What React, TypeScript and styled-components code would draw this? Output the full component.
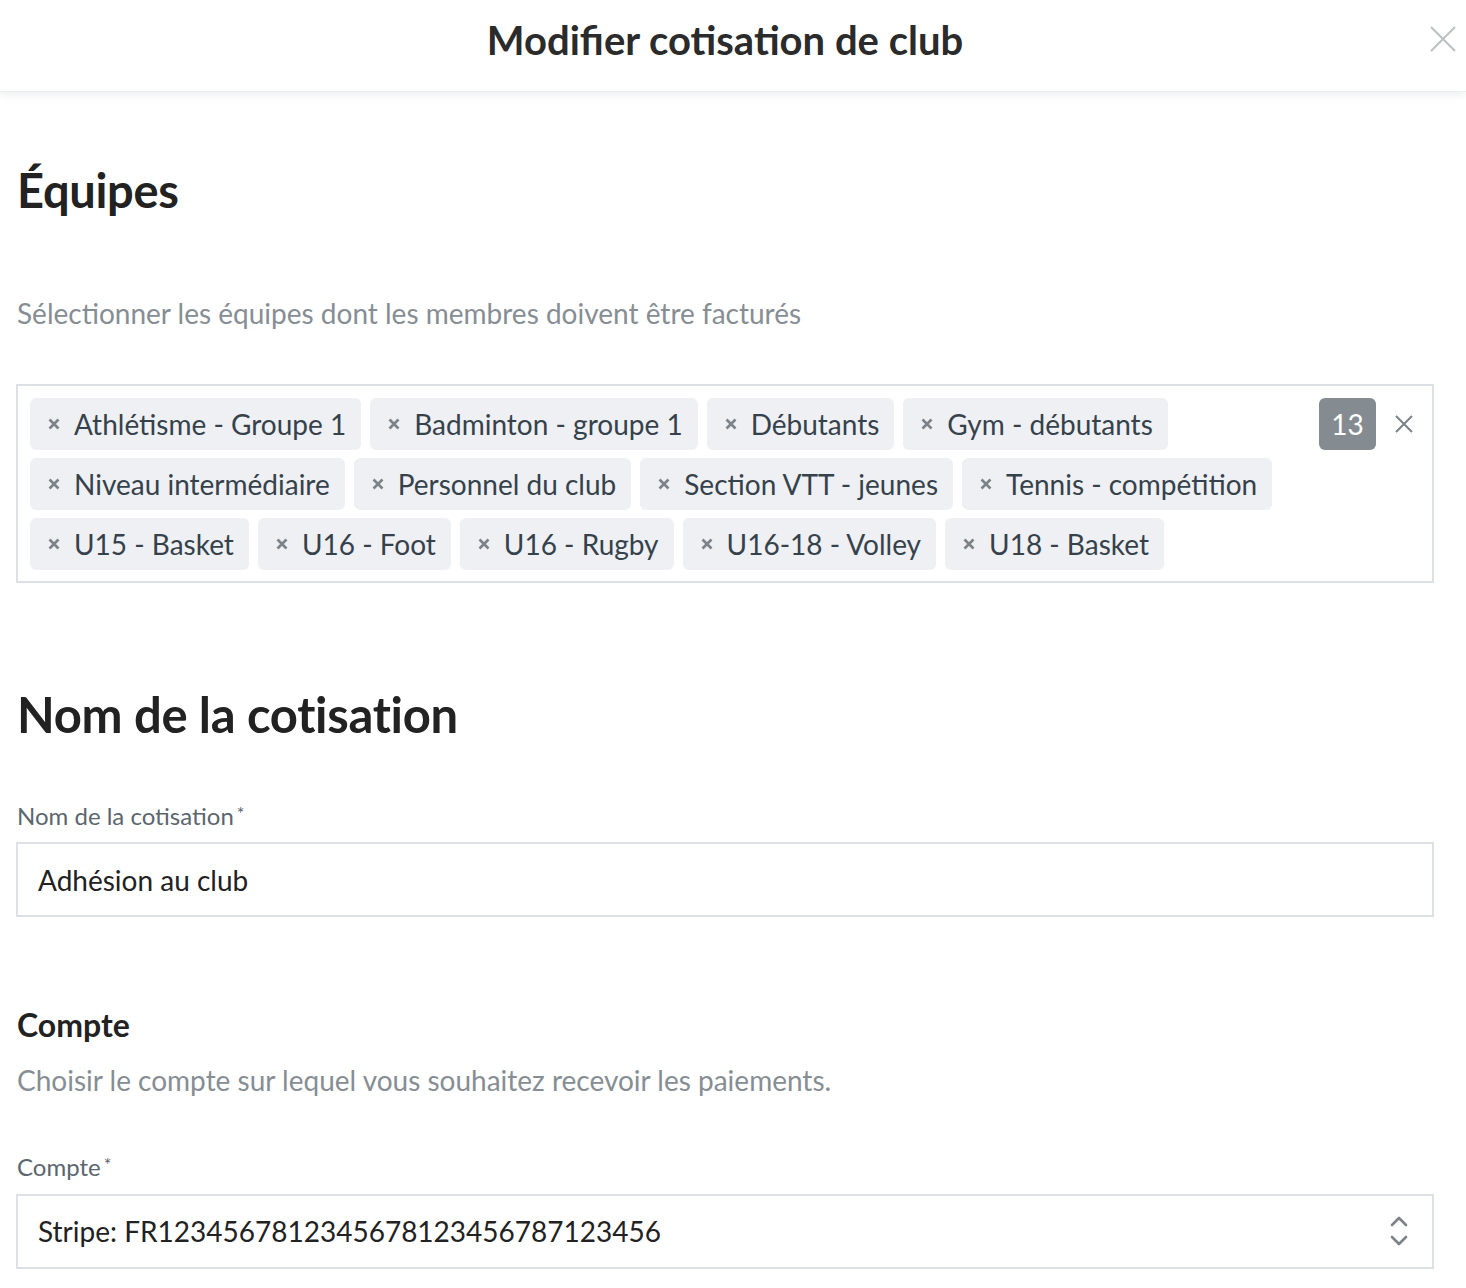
import * as React from 'react';
import styled, { createGlobalStyle } from 'styled-components';

const GlobalStyle = createGlobalStyle`
	html, body {
		margin: 0;
		padding: 0;
		background: #ffffff;
		font-family: Lato, 'Open Sans', sans-serif;
	}
	* {
		box-sizing: border-box;
	}
`

const Page = styled.div`
	width: 1466px;
	min-height: 1288px;
	background: #ffffff;
`

const Header = styled.header`
	position: relative;
	height: 92px;
	display: flex;
	align-items: flex-start;
	justify-content: center;
	padding: 16px 16px 0 0;
	background: #ffffff;
	box-shadow: 0 3px 8px rgba(40, 50, 70, 0.08);
	border-bottom: 1px solid #eceef2;
`

const Title = styled.h1`
	margin: 0;
	font-size: 40px;
	line-height: 1.2;
	font-weight: 700;
	color: #2b2b2b;
`

const CloseButton = styled.button`
	position: absolute;
	right: 9px;
	top: 25px;
	width: 28px;
	height: 28px;
	padding: 0;
	border: none;
	background: none;
	cursor: pointer;
`

const Content = styled.main`
	padding: 0 32px 0 17px;
	display: flex;
	flex-direction: column;
`

const SectionTitle = styled.h2<{ $size: number; $top: number }>`
	margin: ${({ $top }) => $top}px 0 0 0;
	font-size: ${({ $size }) => $size}px;
	font-weight: 700;
	color: #222222;
	line-height: 1.2;
	letter-spacing: -0.3px;
`

const SubTitle = styled.h3`
	margin: 88px 0 0 0;
	font-size: 32px;
	font-weight: 700;
	color: #222222;
	line-height: 1.26;
`

const Hint = styled.p<{ $top: number }>`
	margin: ${({ $top }) => $top}px 0 0 0;
	font-size: 28px;
	color: #868e94;
	line-height: 1.3;
`

const TagBox = styled.div`
	margin-top: 52px;
	margin-left: -1px;
	width: 1418px;
	min-height: 199px;
	border: 2px solid #dde0e7;
	padding: 12px 18px 11px 12px;
	display: flex;
	align-items: flex-start;
`

const TagList = styled.div`
	flex: 1;
	display: flex;
	flex-wrap: wrap;
	column-gap: 9px;
	row-gap: 8px;
`

const Tag = styled.span`
	height: 52px;
	display: inline-flex;
	align-items: center;
	gap: 14px;
	padding: 0 15px 0 18px;
	background: #eef0f3;
	border-radius: 6px;
	font-size: 28px;
	color: #36424b;
	white-space: nowrap;
`

const Count = styled.span`
	height: 52px;
	width: 57px;
	display: inline-flex;
	align-items: center;
	justify-content: center;
	background: #858c91;
	border-radius: 6px;
	font-size: 28px;
	color: #ffffff;
`

const ClearAll = styled.button`
	height: 52px;
	width: 20px;
	margin-left: 18px;
	padding: 0;
	display: inline-flex;
	align-items: center;
	justify-content: center;
	border: none;
	background: none;
`

const Field = styled.div<{ $top: number }>`
	margin-top: ${({ $top }) => $top}px;
	display: flex;
	flex-direction: column;
`

const Label = styled.label`
	font-size: 24px;
	color: #5b666e;
	line-height: 1.2;
	margin-bottom: 12px;
`

const Star = styled.span`
	position: relative;
	top: -5px;
	font-size: 18px;
	margin-left: 3px;
`

const InputBox = styled.div`
	margin-left: -1px;
	width: 1418px;
	height: 75px;
	border: 2px solid #dde0e7;
	padding: 0 24px 0 20px;
	display: flex;
	align-items: center;
	justify-content: space-between;
	font-size: 28px;
	color: #222222;
`

const teams = [
	'Athlétisme - Groupe 1',
	'Badminton - groupe 1',
	'Débutants',
	'Gym - débutants',
	'Niveau intermédiaire',
	'Personnel du club',
	'Section VTT - jeunes',
	'Tennis - compétition',
	'U15 - Basket',
	'U16 - Foot',
	'U16 - Rugby',
	'U16-18 - Volley',
	'U18 - Basket',
]

export default function App() {
	return (
		<Page>
			<GlobalStyle />
			<Header>
				<Title>Modifier cotisation de club</Title>
				<CloseButton aria-label="Fermer">
					<svg width="28" height="28" viewBox="0 0 28 28">
						<path d="M2 2 L26 26 M26 2 L2 26" stroke="#bcc0c4" strokeWidth="2" fill="none" />
					</svg>
				</CloseButton>
			</Header>
			<Content>
				<SectionTitle $size={47} $top={70}>Équipes</SectionTitle>
				<Hint $top={77}>Sélectionner les équipes dont les membres doivent être facturés</Hint>
				<TagBox>
					<TagList>
						{teams.map((t) => (
							<Tag key={t}>
								<svg width="12" height="12" viewBox="0 0 12 12">
									<path d="M1.5 1.5 L10.5 10.5 M10.5 1.5 L1.5 10.5" stroke="#7b8388" strokeWidth="2.6" fill="none" />
								</svg>
								{t}
							</Tag>
						))}
					</TagList>
					<Count>13</Count>
					<ClearAll aria-label="Tout effacer">
						<svg width="20" height="20" viewBox="0 0 20 20">
							<path d="M2 2 L18 18 M18 2 L2 18" stroke="#7b8388" strokeWidth="2" fill="none" />
						</svg>
					</ClearAll>
				</TagBox>
				<SectionTitle $size={49} $top={102}>Nom de la cotisation</SectionTitle>
				<Field $top={58}>
					<Label>Nom de la cotisation<Star>*</Star></Label>
					<InputBox>Adhésion au club</InputBox>
				</Field>
				<SubTitle>Compte</SubTitle>
				<Hint $top={16}>Choisir le compte sur lequel vous souhaitez recevoir les paiements.</Hint>
				<Field $top={55}>
					<Label>Compte<Star>*</Star></Label>
					<InputBox>
						Stripe: FR1234567812345678123456787123456
						<svg width="18" height="30" viewBox="0 0 18 30">
							<path d="M2 9 L9 2 L16 9 M2 21 L9 28 L16 21" stroke="#7b8388" strokeWidth="2.6" fill="none" strokeLinecap="round" strokeLinejoin="round" />
						</svg>
					</InputBox>
				</Field>
			</Content>
		</Page>
	)
}
